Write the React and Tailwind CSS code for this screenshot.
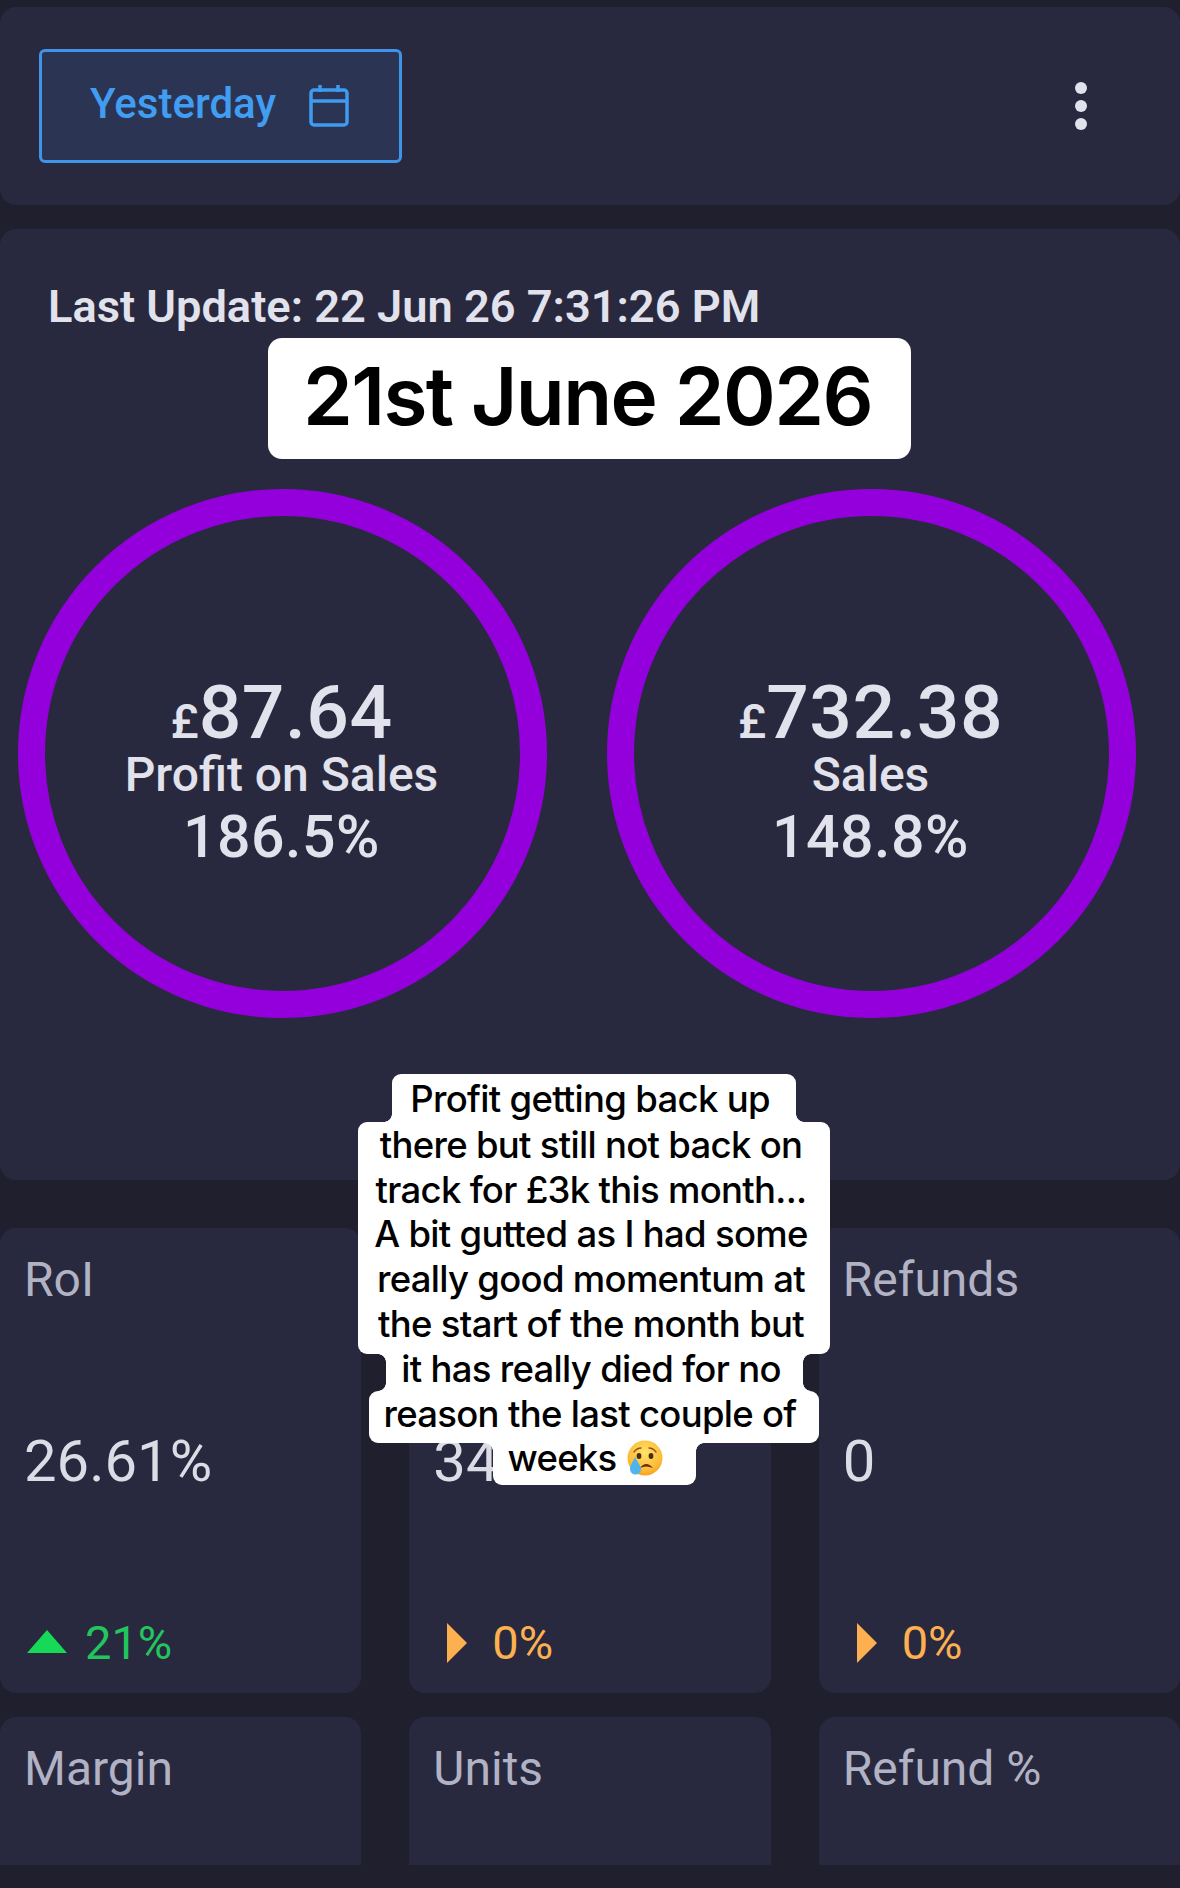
const roboto = "font-['Roboto',sans-serif]";

function Ring({ amount, label, pct }) {
  return (
    <div className="w-[529px] h-[529px] shrink-0 rounded-full border-[27px] border-[#9400dc] pt-[44px] flex flex-col items-center justify-center text-[#e2e2ec]">
      <div className="flex items-baseline h-[68px] leading-[68px] -mt-[2px] -ml-[2px]">
        <span className="text-[48px] font-medium">£</span>
        <span className="text-[75px] font-medium tracking-[0.5px]">{amount}</span>
      </div>
      <div className="text-[48px] font-medium leading-[52px] mt-[3px] -ml-[2px]">{label}</div>
      <div className="text-[59px] font-medium leading-[68px] tracking-[0.5px] mt-[2px] -ml-[2px]">{pct}</div>
    </div>
  );
}

function Trend({ dir, value }) {
  const up = dir === "up";
  return (
    <div className={`flex items-center text-[47px] leading-[50px] ${up ? "text-[#22c55e]" : "text-[#fdb04f]"}`}>
      {up ? (
        <svg width="40" height="24" viewBox="0 0 40 24" className="ml-[3px] mr-[18px] -mt-[2px]">
          <polygon points="20,0 40,23 0,23" fill="#16d958" />
        </svg>
      ) : (
        <svg width="20" height="40" viewBox="0 0 20 40" className="ml-[14px] mr-[25px]">
          <polygon points="0,0 20,20 0,40" fill="#fdb04f" />
        </svg>
      )}
      <span>{value}</span>
    </div>
  );
}

function Metric({ label, value, dir, pct }) {
  return (
    <div className="h-[465px] bg-[#28293e] rounded-[16px] pl-[24px] pt-[25px] pb-[25px] flex flex-col justify-between">
      <div className="text-[48px] leading-[54px] text-[#b1b2c4] min-h-[54px]">{label}</div>
      <div className="text-[58px] leading-[64px] text-[#dcdce6] -mt-[4px]">{value}</div>
      <Trend dir={dir} value={pct} />
    </div>
  );
}

function Stub({ label }) {
  return (
    <div className="h-[148px] bg-[#28293e] rounded-t-[16px] pl-[24px] pt-[25px] overflow-hidden">
      <div className="text-[48px] leading-[54px] text-[#b1b2c4]">{label}</div>
    </div>
  );
}

function Emoji() {
  return (
    <svg width="36" height="36" viewBox="0 0 36 36" className="ml-[10px]">
      <defs>
        <radialGradient id="face" cx="50%" cy="35%" r="70%">
          <stop offset="0%" stopColor="#ffe36b" />
          <stop offset="70%" stopColor="#fdbb35" />
          <stop offset="100%" stopColor="#f59a1c" />
        </radialGradient>
      </defs>
      <circle cx="18" cy="18" r="17.5" fill="url(#face)" />
      <ellipse cx="12" cy="16" rx="2.4" ry="3" fill="#4a2c12" />
      <ellipse cx="24" cy="16" rx="2.4" ry="3" fill="#4a2c12" />
      <path d="M7 12 Q10 8 14 8" stroke="#8a5418" strokeWidth="1.4" fill="none" strokeLinecap="round" />
      <path d="M22 8 Q26 8 29 12" stroke="#8a5418" strokeWidth="1.4" fill="none" strokeLinecap="round" />
      <path d="M13 28 Q19 20 26 28 Q19 25 13 28Z" fill="#6a2a14" />
      <path d="M8 17 C5 23 3 26 3 29 A5.5 5.5 0 0 0 14 29 C14 26 11 23 8 17Z" fill="#4fb4ee" />
    </svg>
  );
}

function FilletsTop() {
  return (
    <>
      <span className="absolute top-0 -left-[8px] w-[8px] h-[8px] bg-[radial-gradient(circle_at_0_100%,transparent_7.5px,white_8px)]" />
      <span className="absolute top-0 -right-[8px] w-[8px] h-[8px] bg-[radial-gradient(circle_at_100%_100%,transparent_7.5px,white_8px)]" />
    </>
  );
}

function FilletsBottom() {
  return (
    <>
      <span className="absolute bottom-0 -left-[8px] w-[8px] h-[8px] bg-[radial-gradient(circle_at_0_0,transparent_7.5px,white_8px)]" />
      <span className="absolute bottom-0 -right-[8px] w-[8px] h-[8px] bg-[radial-gradient(circle_at_100%_0,transparent_7.5px,white_8px)]" />
    </>
  );
}

export default function App() {
  return (
    <div className={`relative w-[1180px] h-[1888px] overflow-hidden bg-[#1f1f2e] pt-[7px] ${roboto}`}>
      <div className="h-[198px] bg-[#28293e] rounded-[16px] pl-[39px] pr-[93px] flex items-center justify-between">
        <div className="w-[363px] h-[114px] rounded-[6px] border-[3px] border-[#3f93e8] bg-[#2b3553] flex items-center pl-[48px] text-[#409df2]">
          <span className="text-[42px] font-medium leading-none -mt-[4px]">Yesterday</span>
          <svg width="40" height="42" viewBox="0 0 40 42" fill="none" stroke="#3f9bf0" strokeWidth="3.5" className="ml-[33px]">
            <rect x="2" y="5" width="36" height="35" rx="3" />
            <path d="M2 16H38M11 0V7M29 0V7" />
          </svg>
        </div>
        <div className="flex flex-col gap-[6px]">
          <span className="w-[12px] h-[12px] rounded-full bg-[#e2e2ec]" />
          <span className="w-[12px] h-[12px] rounded-full bg-[#e2e2ec]" />
          <span className="w-[12px] h-[12px] rounded-full bg-[#e2e2ec]" />
        </div>
      </div>

      <div className="mt-[24px] h-[951px] bg-[#28293e] rounded-[16px] pt-[48px]">
        <div className="pl-[48px] text-[45.2px] leading-[60px] font-semibold text-[#e2e2ec]">
          Last Update: 22 Jun 26 7:31:26 PM
        </div>
        <div className="mt-[152px] pl-[18px] flex gap-[60px]">
          <Ring amount="87.64" label="Profit on Sales" pct="186.5%" />
          <Ring amount="732.38" label="Sales" pct="148.8%" />
        </div>
      </div>

      <div className="mt-[48px] grid grid-cols-3 gap-x-[48px] gap-y-[24px]">
        <Metric label="RoI" value="26.61%" dir="up" pct="21%" />
        <Metric label="" value="34" dir="flat" pct="0%" />
        <Metric label="Refunds" value="0" dir="flat" pct="0%" />
        <Stub label="Margin" />
        <Stub label="Units" />
        <Stub label="Refund %" />
      </div>

      <div className="absolute left-[268px] top-[338px] w-[643px] h-[121px] pb-[6px] pr-[4px] bg-white rounded-[14px] flex items-center justify-center font-['Inter',sans-serif] font-semibold text-[80px] tracking-[-1.6px] text-black">
        21st June 2026
      </div>

      <div className="absolute left-[358px] top-[1074px] w-[472px] flex flex-col items-center font-['Inter',sans-serif] font-medium text-[36.5px] tracking-[-0.7px] text-black">
        <div className="relative w-[404px] h-[48px] pr-[8px] pt-[3px] bg-white rounded-t-[9px] flex items-center justify-center whitespace-nowrap">
          Profit getting back up
          <FilletsBottom />
        </div>
        <div className="w-[472px] bg-white rounded-[9px] flex flex-col items-center pr-[6px] pb-[7px] whitespace-nowrap">
          <div className="h-[46px] flex items-center">there but still not back on</div>
          <div className="h-[44px] flex items-center">track for £3k this month...</div>
          <div className="h-[45px] flex items-center">A bit gutted as I had some</div>
          <div className="h-[44px] flex items-center">really good momentum at</div>
          <div className="h-[46px] flex items-center">the start of the month but</div>
        </div>
        <div className="relative w-[417px] h-[37px] pr-[6px] bg-white flex items-center justify-center whitespace-nowrap">
          <span className="-mt-[7px] leading-[30px]">it has really died for no</span>
          <FilletsTop />
          <FilletsBottom />
        </div>
        <div className="w-[450px] h-[52px] pb-[6px] pr-[8px] bg-white rounded-[9px] flex items-center justify-center whitespace-nowrap">
          reason the last couple of
        </div>
        <div className="relative w-[203px] h-[42px] pb-[12px] pr-[18px] bg-white rounded-b-[9px] flex items-center justify-center whitespace-nowrap">
          weeks
          <Emoji />
          <FilletsTop />
        </div>
      </div>
    </div>
  );
}
